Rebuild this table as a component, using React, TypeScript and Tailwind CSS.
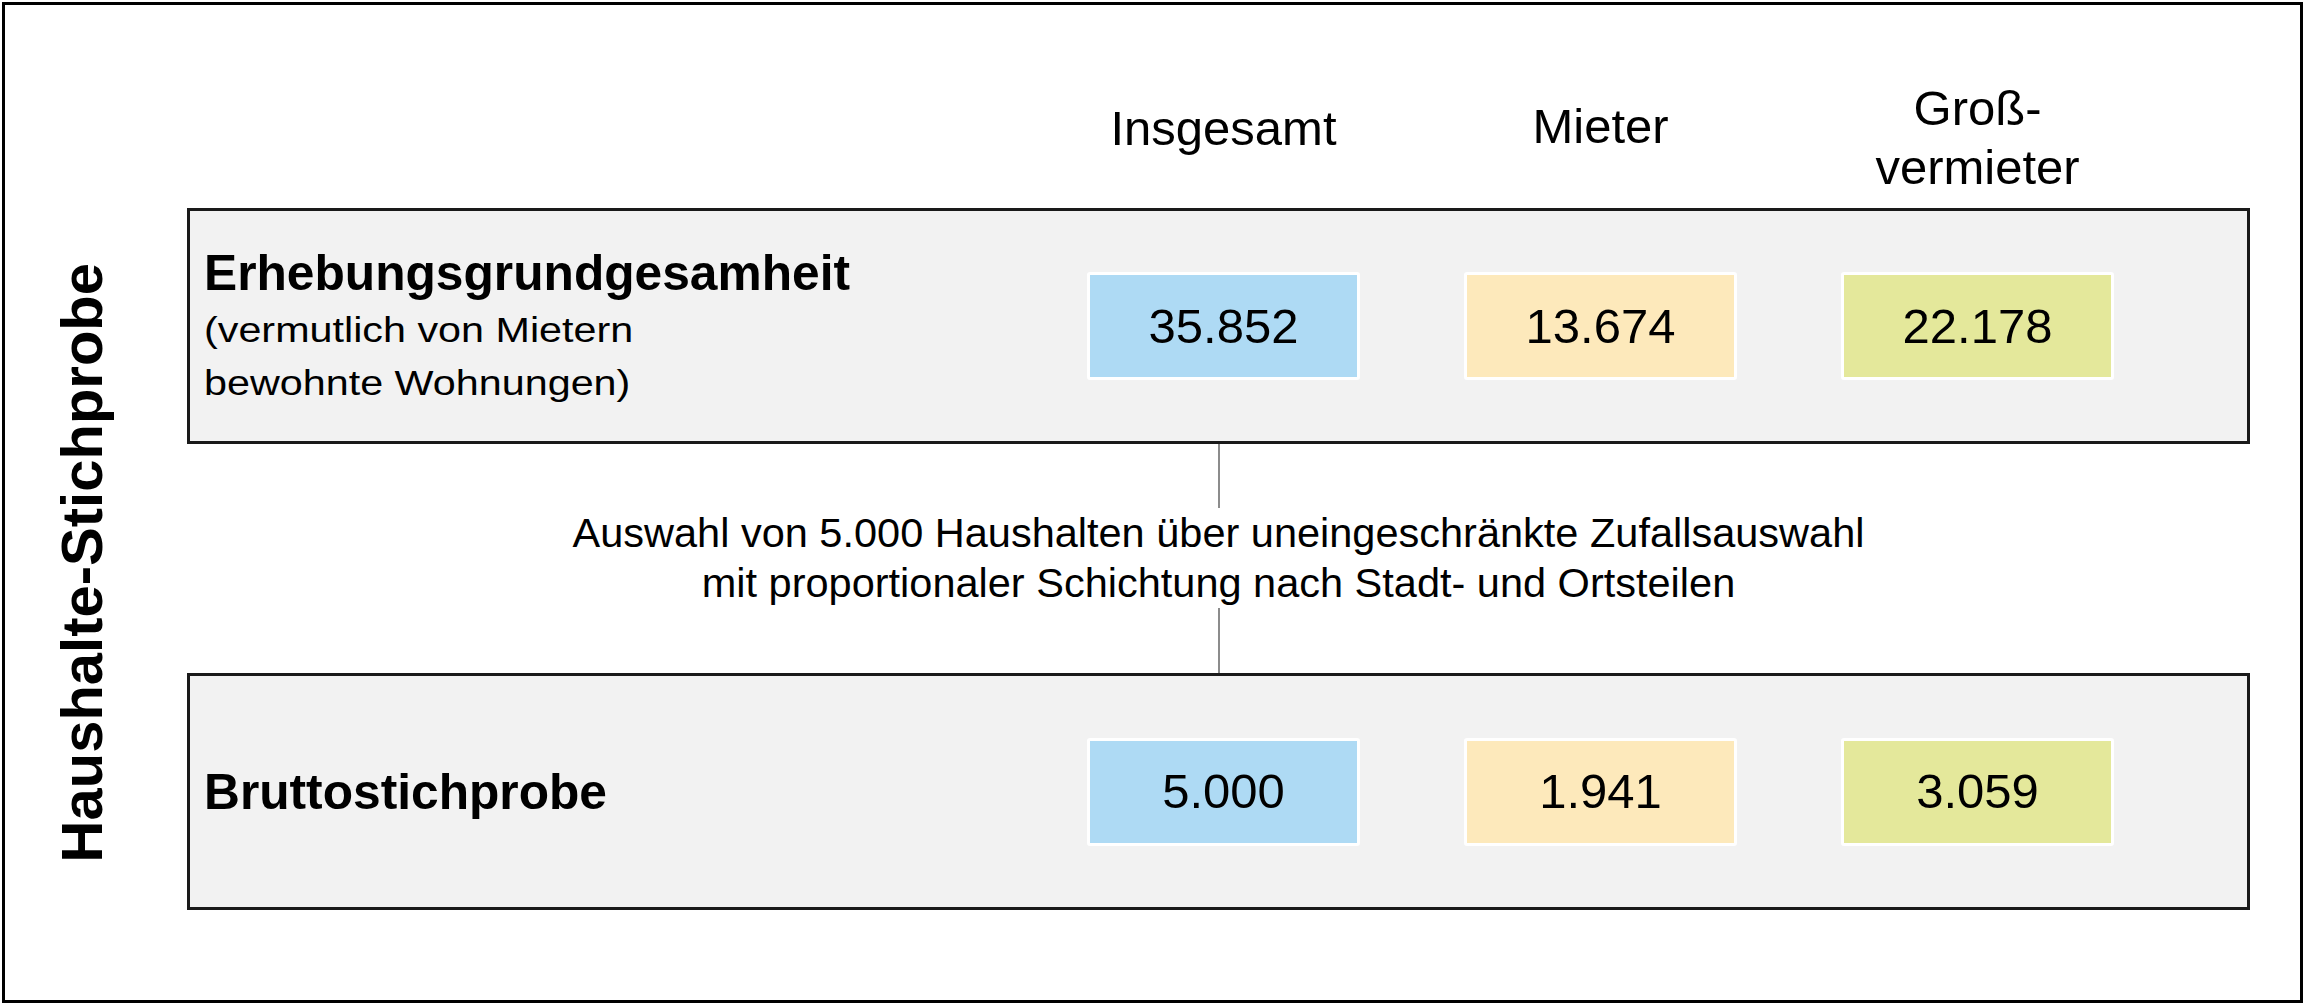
import React from "react";

function ValueBox({ value, color }: { value: string; color: string }) {
  return (
    <div
      className={`w-[273px] h-[108px] border-[3px] border-white rounded-[3px] flex items-center justify-center text-[49px] leading-none ${color}`}
    >
      {value}
    </div>
  );
}

function Boxes({ values }: { values: string[] }) {
  return (
    <div className="flex gap-[104px]">
      <ValueBox value={values[0]} color="bg-[#aedaf4]" />
      <ValueBox value={values[1]} color="bg-[#fde9bb]" />
      <ValueBox value={values[2]} color="bg-[#e4e89b]" />
    </div>
  );
}

export default function App() {
  return (
    <div className="w-[2306px] h-[1006px] bg-white pt-[2px] pl-[2px] font-['Liberation_Sans',Arial,sans-serif] text-black">
      <div className="w-[2301px] h-[1001px] border-[3px] border-black flex">
        {/* left vertical label */}
        <div className="w-[182px] shrink-0 pt-[203px] pb-[90px] pl-[48px] flex items-center">
          <div className="[writing-mode:vertical-rl] rotate-180 text-[58px] leading-[58px] font-bold whitespace-nowrap translate-y-[4px]">
            Haushalte-Stichprobe
          </div>
        </div>

        {/* main column */}
        <div className="w-[2063px] shrink-0 flex flex-col">
          {/* header */}
          <div className="h-[203px] flex justify-end items-end gap-[104px] pr-[136px] text-[49px] leading-[59px] text-center">
            <div className="w-[273px] pb-[50px]">Insgesamt</div>
            <div className="w-[273px] pb-[52px]">Mieter</div>
            <div className="w-[273px] pb-[11px]">
              Groß-
              <br />
              vermieter
            </div>
          </div>

          {/* top panel */}
          <div className="h-[236px] border-[3px] border-[#1a1a1a] bg-[#f2f2f2] flex items-center pl-[14px] pr-[133px]">
            <div className="flex-1">
              <div className="text-[49.7px] leading-[60px] font-bold">Erhebungsgrundgesamheit</div>
              <div className="text-[35px] leading-[53px] whitespace-nowrap">
                <span className="inline-block origin-left scale-x-[1.18]">(vermutlich von Mietern</span>
              </div>
              <div className="text-[35px] leading-[53px] whitespace-nowrap">
                <span className="inline-block origin-left scale-x-[1.18]">bewohnte Wohnungen)</span>
              </div>
            </div>
            <Boxes values={["35.852", "13.674", "22.178"]} />
          </div>

          {/* connector */}
          <div className="h-[229px] flex flex-col items-center">
            <div className="w-[2px] h-[64px] bg-[#8c8c8c]" />
            <div className="text-[41.5px] leading-[50px] text-center whitespace-nowrap">
              Auswahl von 5.000 Haushalten über uneingeschränkte Zufallsauswahl
              <br />
              mit proportionaler Schichtung nach Stadt- und Ortsteilen
            </div>
            <div className="w-[2px] flex-1 bg-[#8c8c8c]" />
          </div>

          {/* bottom panel */}
          <div className="h-[237px] border-[3px] border-[#1a1a1a] bg-[#f2f2f2] flex items-center pl-[14px] pr-[133px]">
            <div className="flex-1 text-[49.7px] leading-[60px] font-bold">Bruttostichprobe</div>
            <Boxes values={["5.000", "1.941", "3.059"]} />
          </div>
        </div>
      </div>
    </div>
  );
}
